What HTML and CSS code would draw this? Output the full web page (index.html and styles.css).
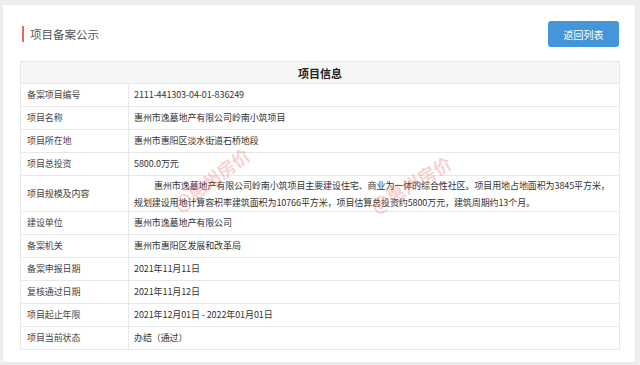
FILE: index.html
```html
<!DOCTYPE html>
<html lang="zh">
<head>
<meta charset="utf-8">
<link rel="stylesheet" href="styles.css">
</head>
<body>
<div class="card">
  <div class="head">
    <h1 class="title">项目备案公示</h1>
    <button class="back">返回列表</button>
  </div>
  <div class="table-wrap">
    <table class="info">
      <thead>
        <tr><th colspan="2">项目信息</th></tr>
      </thead>
      <tbody>
        <tr><td class="k">备案项目编号</td><td class="v">2111-441303-04-01-836249</td></tr>
        <tr><td class="k">项目名称</td><td class="v">惠州市逸墓地产有限公司岭南小筑项目</td></tr>
        <tr><td class="k">项目所在地</td><td class="v">惠州市惠阳区淡水街道石桥地段</td></tr>
        <tr><td class="k">项目总投资</td><td class="v">5800.0万元</td></tr>
        <tr class="tall"><td class="k">项目规模及内容</td><td class="v long">惠州市逸墓地产有限公司岭南小筑项目主要建设住宅、商业为一体的综合性社区。项目用地占地面积为3845平方米，<br>规划建设用地计算容积率建筑面积为10766平方米，项目估算总投资约5800万元，建筑周期约13个月。</td></tr>
        <tr><td class="k">建设单位</td><td class="v">惠州市逸墓地产有限公司</td></tr>
        <tr><td class="k">备案机关</td><td class="v">惠州市惠阳区发展和改革局</td></tr>
        <tr><td class="k">备案申报日期</td><td class="v">2021年11月11日</td></tr>
        <tr><td class="k">复核通过日期</td><td class="v">2021年11月12日</td></tr>
        <tr><td class="k">项目起止年限</td><td class="v">2021年12月01日 - 2022年01月01日</td></tr>
        <tr><td class="k">项目当前状态</td><td class="v">办结（通过）</td></tr>
      </tbody>
    </table>
    <span class="wm wm-a">@惠州房价</span>
    <span class="wm wm-b">@惠州房价</span>
  </div>
</div>
</body>
</html>
```
FILE: styles.css
```css
html, body {
  margin: 0;
  padding: 0;
}
body {
  background: #eeeeee;
  font-family: "Noto Sans CJK SC", "Noto Sans", sans-serif;
  color: #333;
  width: 640px;
  height: 365px;
  overflow: hidden;
}
.card {
  margin: 5px 5px 0 3px;
  height: 357px;
  box-sizing: border-box;
  background: #fff;
  box-shadow: 0 0 2px rgba(0,0,0,0.08);
  padding: 16px 15px 0 17px;
}
.head {
  display: flex;
  justify-content: space-between;
  align-items: flex-start;
  height: 40px;
}
.title {
  margin: 0 0 0 2px;
  padding-left: 6px;
  border-left: 2px solid #e8675a;
  font-size: 11.5px;
  font-weight: normal;
  color: #555;
  line-height: 16px;
  height: 16px;
  margin-top: 5px;
}
.back {
  width: 71px;
  height: 26px;
  margin-right: 1px;
  border: none;
  border-radius: 3px;
  background: #4496da;
  color: #fff;
  font-family: inherit;
  font-size: 10px;
  padding: 0;
}
.table-wrap {
  position: relative;
  margin-top: 0;
  width: 600px;
}
.info {
  width: 600px;
  border-collapse: collapse;
  font-size: 9px;
  letter-spacing: -0.1px;
}
.info th {
  height: 21px;
  padding: 0;
  background: #f6f6f6;
  border: 1px solid #e8e8e8;
  font-size: 11px;
  font-weight: bold;
  color: #222;
  text-align: center;
  line-height: 14px;
  letter-spacing: 0;
}
.info td {
  height: 22px;
  border: 1px solid #e8e8e8;
  padding: 0;
  line-height: 14px;
  vertical-align: middle;
}
.info td.k {
  width: 101px;
  padding-left: 6px;
  color: #444;
}
.info td.v {
  padding-left: 5px;
  color: #333;
}
.info tr.tall td {
  height: 35px;
}
.info td.long {
  text-indent: 20px;
  line-height: 17px;
  white-space: nowrap;
}
.wm {
  position: absolute;
  font-size: 18px;
  font-weight: bold;
  color: rgba(232, 90, 90, 0.28);
  white-space: nowrap;
  transform-origin: left center;
  pointer-events: none;
}
.wm-a {
  left: 155px;
  top: 132px;
  transform: rotate(-37deg);
}
.wm-b {
  left: 352px;
  top: 133px;
  transform: rotate(-31deg);
}
```
